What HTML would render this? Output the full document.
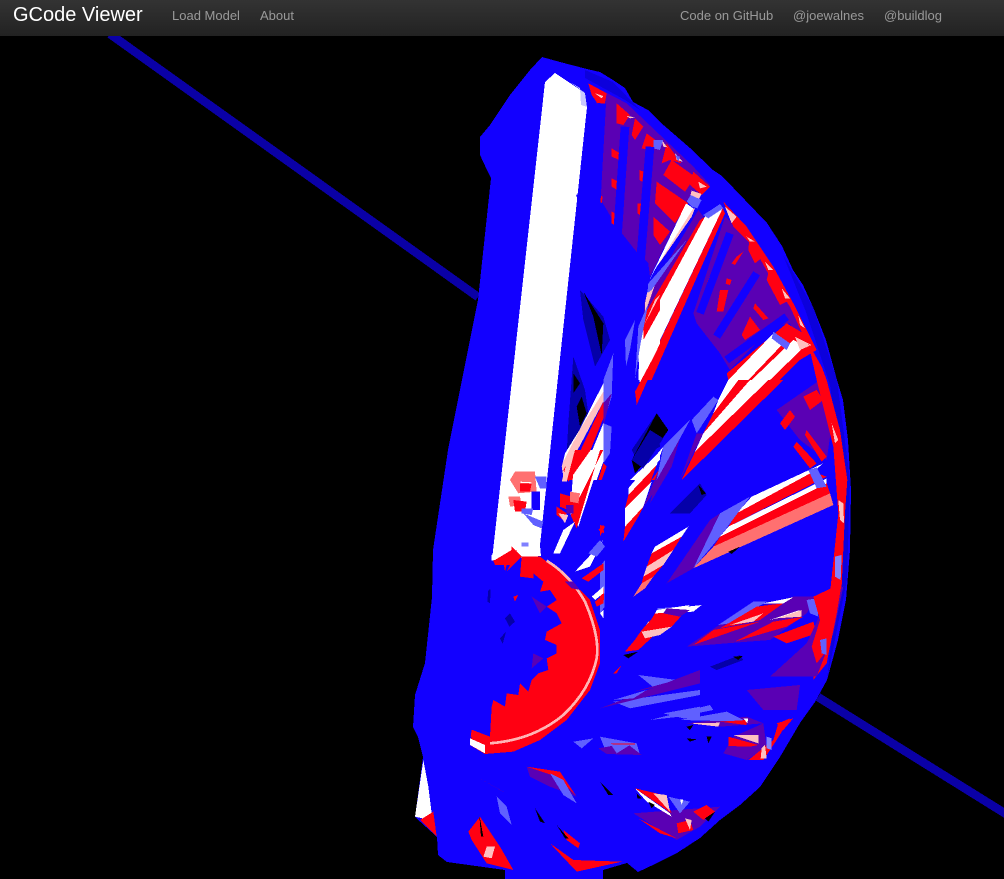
<!DOCTYPE html>
<html><head><meta charset="utf-8"><title>GCode Viewer</title>
<style>
html,body{margin:0;padding:0;background:#000;width:1004px;height:879px;overflow:hidden;font-family:"Liberation Sans",Arial,sans-serif}
#bar{position:absolute;left:0;top:0;width:1004px;height:36px;background:linear-gradient(#333,#222);z-index:2}
#bar span{position:absolute;top:8px;font-size:13px;line-height:16px;color:#999;white-space:nowrap}
#bar b{position:absolute;left:13px;top:3px;font-size:20px;line-height:24px;font-weight:400;color:#fff;white-space:nowrap}
svg{position:absolute;left:0;top:0}
</style></head><body>
<div id="bar"><b>GCode Viewer</b><span style="left:172px">Load Model</span><span style="left:260px">About</span><span style="left:680px">Code on GitHub</span><span style="left:793px">@joewalnes</span><span style="left:884px">@buildlog</span></div>
<svg width="1004" height="879" viewBox="0 0 1004 879" shape-rendering="crispEdges">
<rect width="1004" height="879" fill="#000"/>
<path d="M110 34L478 297M818 697L1006 814" stroke="#0a00a6" stroke-width="8.5" fill="none"/>
<!-- blue silhouette -->
<polygon fill="#1200ff" points="542,57 560,62 587,69 600,72 613,80 625,88 633,102 648,110 660,122 690,148 713,170 722,176 745,200 767,223 782,246 793,270 803,285 813,307 826,340 837,380 843,400 848,440 851,490 850,550 846,600 838,640 827,680 815,702 800,723 780,757 760,787 740,805 720,820 700,838 677,853 655,864 638,872 627,863 603,870 603,879 505,879 505,870 447,862 438,855 437,837 415,817 423,757 418,737 413,727 415,695 425,663 432,597 433,550 448,450 478,300 491,178 487,170 480,155 480,137 490,125 510,95 530,70"/>
<polygon fill="#0c00dc" points="783,255 813,307 837,380 850,480 847,580 827,680 838,580 843,480 830,385 806,312"/>
<polygon fill="#0c00dc" points="585,70 613,82 640,110 625,100 585,78"/>
<!-- white bar -->
<polygon fill="#fff" points="555,73 585,93 587,107 540,545 541,556 492,560 545,82"/>
<polygon fill="#c8c8ff" points="570,82 585,93 587,107 581,105 580,88"/>

<g transform="translate(560,60) scale(.33333)">
<polygon fill="#5a00b4" points="85,70 200,130 300,225 400,320 450,375 380,425 270,650 265,610 225,570 170,500 105,390 130,180"/>
<g fill="#ff0012">
<polygon points="85,70 140,100 130,155 95,105"/><polygon points="170,130 210,165 190,195 170,190"/><polygon points="225,175 250,200 225,240 215,225"/><polygon points="260,220 300,250 265,270 245,265"/><polygon points="320,250 365,310 330,300 305,310"/><polygon points="335,300 405,350 375,395 310,345"/><polygon points="290,365 385,430 345,490 285,430"/><polygon points="280,470 330,515 300,555 280,525"/><polygon points="155,265 180,280 178,300 155,290"/><polygon points="155,355 175,365 172,390 155,380"/><polygon points="155,455 175,465 172,500 155,490"/><polygon points="120,405 128,410 125,430 113,420"/><polygon points="238,330 250,335 247,365 238,360"/><polygon points="232,430 243,430 240,465 232,460"/><polygon points="400,335 450,380 425,405 390,375"/>
</g>
<g fill="#ffc0c0"><polygon points="105,100 130,108 125,115"/><polygon points="200,168 225,172 210,175"/><polygon points="305,240 322,262 310,260"/><polygon points="345,280 368,305 350,300"/><polygon points="415,365 440,380 420,385"/></g>
<g fill="#6060ff"><polygon points="280,240 310,240 300,270 280,265"/><polygon points="345,285 360,290 355,305"/></g>
<!-- blue spokes over region 1 -->
<path d="M125 130L105 490M195 200L170 560M270 260L240 620M60 400L160 640" stroke="#1200ff" stroke-width="26" fill="none"/>
<!-- strip 1 and 2 -->
<polygon fill="#5a00b4" points="415,450 430,470 250,770 255,720 285,670"/>
<polygon fill="#fff" points="378,430 400,445 290,620 268,660"/>
<polygon fill="#ffc0c0" points="405,445 395,470 305,600 290,620 400,445"/>
<polygon fill="#ff0012" points="420,480 435,470 240,830 250,770"/>
<polygon fill="#fff" points="435,470 488,445 260,925 245,960 235,960 240,830"/>
<polygon fill="#ff0012" points="488,445 495,460 275,960 245,960"/>
<polygon fill="#ffc0c0" points="265,680 290,660 255,760 255,730"/>
<polygon fill="#6060ff" points="265,670 380,540 275,690 262,700"/>
<polygon fill="#ffc0c0" points="395,392 425,402 412,425 390,410"/>
<polygon fill="#6060ff" points="380,425 392,405 425,420 412,445 395,440"/>
<polygon fill="#6060ff" points="430,465 480,432 490,445 445,475"/>
<!-- region 2 -->
<polygon fill="#5a00b4" points="495,470 600,560 700,740 760,850 720,860 690,790 640,800 510,930 480,880 410,790 400,760"/>
<g fill="#ff0012">
<polygon points="530,590 550,575 525,615 515,610"/><polygon points="448,650 465,650 440,700 432,695"/><polygon points="480,690 505,690 490,755 470,755"/><polygon points="500,655 515,660 510,675 497,672"/><polygon points="570,770 600,810 555,840 545,825"/><polygon points="585,730 625,775 610,780 580,745"/>
<polygon points="490,425 560,500 600,560 640,620 700,730 770,870 745,860 690,740 630,650 580,560 520,500"/><polygon points="570,515 610,590 585,610 565,570"/><polygon points="630,620 690,720 660,735 620,660"/>
</g>
<g fill="#ffc0c0"><polygon points="495,440 530,470 515,490"/><polygon points="560,530 585,545 570,545"/><polygon points="615,605 640,630 625,630"/><polygon points="665,685 690,715 675,715"/><polygon points="715,765 735,805 720,795"/></g>
<path d="M510 520L420 760M590 640L470 830M680 770L500 900" stroke="#1200ff" stroke-width="24" fill="none"/>
<!-- lower right strips -->
<polygon fill="#ff0012" points="500,940 680,790 730,820 770,870 720,900 660,960 505,960"/>
<polygon fill="#fff" points="505,960 640,820 670,850 565,960"/>
<polygon fill="#fff" points="575,960 700,840 735,858 630,960"/>
<polygon fill="#6060ff" points="640,815 690,850 680,870 635,835"/>
<polygon fill="#ffc0c0" points="705,830 755,855 720,870"/>
<polygon fill="#ff0012" points="745,850 785,920 800,960 770,960"/>
</g>
<!-- black holes -->
<g transform="translate(540,280) scale(.33333)">
<polygon fill="#0500a8" points="120,30 190,110 210,180 165,260 130,120"/><polygon fill="#000" points="130,35 190,130 185,225 160,110"/>
<polygon fill="#0500a8" points="85,430 100,230 135,330 145,400 80,520"/><polygon fill="#000" points="100,280 120,310 100,340"/><polygon fill="#000" points="110,380 125,350 140,400 120,440"/>
<polygon fill="#ffc0c0" points="75,520 190,335 190,365 70,590 65,560"/><polygon fill="#fff" points="190,310 190,335 75,520 70,545"/>
<polygon fill="#ff0012" points="190,365 190,415 115,600 80,600"/><polygon fill="#fff" points="190,430 190,545 170,600 120,600"/><polygon fill="#ff0012" points="190,550 200,560 185,600 175,600"/>
<polygon fill="#6060ff" points="190,300 220,220 215,350 190,430"/><polygon fill="#5a00b4" points="190,370 215,340 190,440"/><polygon fill="#6060ff" points="190,430 215,440 210,520 190,550"/>
<polygon fill="#6060ff" points="255,180 285,120 270,210 258,260"/>
<polygon fill="#ff0012" points="360,50 360,90 310,180 312,130"/><polygon fill="#ffc0c0" points="345,60 360,45 315,130"/><polygon fill="#fff" points="360,100 360,190 300,320 295,220"/><polygon fill="#ff0012" points="360,195 360,215 290,375 285,335"/><polygon fill="#6060ff" points="295,140 325,70 300,200 285,300"/>
<polygon fill="#0500a8" points="275,510 350,400 360,500 290,540"/><polygon fill="#000" points="280,530 315,475 330,520 295,540"/>
<polygon fill="#fff" points="270,600 360,515 360,540 300,600"/><polygon fill="#ff0012" points="335,600 360,565 360,600"/>
</g>

<g transform="translate(600,380) scale(.33333)">
<polygon fill="#5a00b4" points="530,90 660,0 700,100 680,240 600,180"/>
<polygon fill="#ff0012" points="650,0 680,0 720,150 742,300 735,400 725,620 680,850 640,900 640,870 690,640 715,400 700,200"/>
<g fill="#ff0012"><polygon points="610,50 650,30 670,60 630,90"/><polygon points="540,130 570,90 585,110 555,150"/><polygon points="590,185 650,250 630,265 580,200"/><polygon points="620,150 680,230 665,245 615,165"/></g>
<polygon fill="#ffc0c0" points="695,130 715,180 705,190"/><polygon fill="#ffc0c0" points="715,360 730,370 732,430 720,420"/><polygon fill="#8080ff" points="705,530 725,525 722,600 705,590"/>
<!-- group 1 -->
<polygon fill="#000" points="95,240 170,100 205,150 150,230 105,280"/><polygon fill="#0500a8" points="95,240 150,150 190,175 130,265"/>
<polygon fill="#0500a8" points="210,400 300,310 320,345 270,400"/><polygon fill="#000" points="295,315 318,340 305,345"/>
<polygon fill="#fff" points="85,325 190,200 170,255 85,345"/><polygon fill="#ff0012" points="85,345 170,255 150,310 75,385"/><polygon fill="#fff" points="75,385 155,305 130,380 75,440"/><polygon fill="#ff0012" points="75,440 130,380 115,410 70,485"/>
<polygon fill="#5a00b4" points="130,380 185,250 230,170 160,340"/><polygon fill="#6060ff" points="190,200 270,120 240,175 170,300"/><polygon fill="#5a00b4" points="170,300 240,175 215,260 150,370"/>
<!-- group 2 -->
<polygon fill="#fff" points="355,60 385,0 415,0 340,100"/><polygon fill="#ff0012" points="340,100 415,0 450,0 310,160"/><polygon fill="#fff" points="310,160 450,0 505,0 285,215"/><polygon fill="#ff0012" points="285,215 505,0 550,0 245,300"/><polygon fill="#6060ff" points="275,120 340,50 355,60 290,160"/><polygon fill="#5a00b4" points="240,300 290,160 310,160 270,240"/>
<!-- group 3 -->
<polygon fill="#fff" points="455,350 670,250 640,275 410,400"/><polygon fill="#ff0012" points="410,400 640,275 680,290 385,440"/><polygon fill="#fff" points="385,440 680,295 680,310 360,470"/><polygon fill="#ff0012" points="360,470 680,310 690,340 340,500"/><polygon fill="#ff7070" points="340,500 690,340 700,375 280,565"/>
<polygon fill="#6060ff" points="280,565 360,400 450,350 360,470"/><polygon fill="#5a00b4" points="200,610 330,420 360,400 280,565"/>
<polygon fill="#6060ff" points="625,270 650,262 680,320 650,325"/>
<polygon fill="#000" points="385,515 420,500 395,522"/>
<!-- group 4 -->
<polygon fill="#fff" points="165,500 265,440 245,470 155,520"/><polygon fill="#ff0012" points="155,520 245,470 220,510 140,560"/><polygon fill="#ffc0c0" points="140,560 220,510 190,555 130,590"/><polygon fill="#ff0012" points="130,590 190,555 160,590 125,610"/><polygon fill="#ff7070" points="125,610 160,590 135,625 100,650"/>
<!-- group 5 -->
<polygon fill="#fff" points="170,690 305,675 280,695 165,700"/><polygon fill="#6060ff" points="170,685 240,680 260,695 175,695"/><polygon fill="#ff0012" points="165,700 250,695 215,720 150,725"/><polygon fill="#ffc0c0" points="145,725 215,720 180,750 125,755"/><polygon fill="#ff0012" points="125,755 180,750 115,810 75,815"/>
<polygon fill="#000" points="70,825 115,815 85,835"/>
<!-- group 6 -->
<polygon fill="#5a00b4" points="260,800 410,700 580,650 650,650 620,700 510,780 380,790"/>
<polygon fill="#6060ff" points="355,735 460,665 500,665 390,730"/><polygon fill="#fff" points="490,670 580,652 550,670"/><polygon fill="#ff0012" points="360,745 470,680 550,670 480,720"/><polygon fill="#ffc0c0" points="390,735 490,700 460,725"/><polygon fill="#ff0012" points="280,795 340,750 480,725 380,760"/>
<polygon fill="#fff" points="510,720 600,690 590,700"/><polygon fill="#ffc0c0" points="530,715 605,690 605,710"/><polygon fill="#ff0012" points="405,785 520,725 610,710 560,740"/><polygon fill="#6060ff" points="620,660 650,655 655,710 630,700"/>
<polygon fill="#ff0012" points="520,770 640,725 650,760 560,790"/>
<polygon fill="#5a00b4" points="510,890 620,790 690,640 730,620 700,760 650,890"/>
<polygon fill="#ff0012" points="640,650 725,610 710,700 690,800 650,850 635,800 660,720"/>
<polygon fill="#6060ff" points="660,780 680,775 680,825 665,820"/>
<polygon fill="#0500a8" points="330,860 420,825 430,840 350,870"/><polygon fill="#000" points="400,830 428,828 415,840"/>
<polygon fill="#6060ff" points="0,560 15,540 14,680 0,700"/>
<polygon fill="#ff0012" points="0,640 12,625 12,660 0,660"/>
<polygon fill="#ff0012" points="0,435 15,440 0,470"/>
</g>

<!-- hub -->
<g transform="translate(400,450) scale(.33333)">
<!-- upper strips near hub -->
<polygon fill="#fff" points="525,0 610,0 535,230 510,190"/>
<polygon fill="#ff0012" points="490,60 525,0 572,0 505,95"/>
<polygon fill="#ffc0c0" points="485,95 510,0 525,0 500,95"/>
<polygon fill="#ff0012" points="512,195 610,0 600,0 530,235"/>
<polygon fill="#fff" points="460,310 490,240 525,215 480,310"/>
<polygon fill="#ff0012" points="470,170 500,190 490,210 470,195"/><polygon fill="#ffc0c0" points="475,190 505,195 495,220"/>
<polygon fill="#fff" points="525,365 585,300 610,270 570,350"/><polygon fill="#ff0012" points="545,385 610,340 610,360 565,395"/>
<polygon fill="#fff" points="575,440 610,410 610,430 585,450"/><polygon fill="#ff0012" points="585,455 610,435 610,460 590,470"/><polygon fill="#fff" points="600,490 610,480 610,505"/>
<polygon fill="#6060ff" points="565,310 600,270 615,290 590,320"/><polygon fill="#ff0012" points="595,240 610,225 612,250"/>
<!-- blobs on white bar -->
<polygon fill="#ff7070" points="345,65 405,65 410,125 355,130 330,90"/><polygon fill="#ff0012" points="360,100 395,100 390,125 360,125"/><polygon fill="#fff" points="362,95 395,97 395,100 362,99"/>
<polygon fill="#6060ff" points="405,80 440,80 440,115 420,115"/><polygon fill="#ff7070" points="325,140 360,140 365,165 330,170"/><polygon fill="#ff0012" points="340,150 380,155 375,185 345,185"/><polygon fill="#1200ff" points="395,125 420,125 420,180 395,180"/><polygon fill="#6060ff" points="365,175 400,175 395,195 365,190"/>
<polygon fill="#6060ff" points="370,190 430,215 425,235 400,225"/>
<polygon fill="#ff0012" points="480,130 550,150 530,190 480,170"/><polygon fill="#ff7070" points="510,125 540,130 535,160 510,155"/><polygon fill="#5a00b4" points="498,165 520,165 520,190 500,190"/>
<!-- hub base -->
<polygon fill="#ff0012" points="275,325 335,290 365,320 420,320 500,380 570,450 600,540 600,640 570,720 500,810 420,870 340,905 255,912 210,885 218,840 270,860 275,770 280,750 315,770 320,730 355,735 360,700 385,725 395,690 415,670 445,660 440,625 470,610 470,585 435,570 440,545 485,520 470,490 440,470 470,450 450,420 420,425 430,395 400,370 400,385 360,380 365,320 340,345 320,365 285,345"/>
<polygon fill="#1200ff" points="275,320 285,345 330,345 320,365 265,430 255,450 230,800 215,840 140,700 200,300"/>
<polygon fill="#ff0012" points="285,335 350,300 350,320 330,345 320,345 315,365 312,345 288,345"/>
<polygon fill="#fff" points="275,315 335,290 335,300 285,330 275,332"/>
<polygon fill="#fff" points="360,285 415,280 410,310 365,300"/>
<polygon fill="#8080ff" points="365,278 385,278 385,290 365,290"/>
<polygon fill="#fff" points="210,865 255,885 255,910 210,885"/>
<polygon fill="#ff0012" points="215,840 262,860 258,880 212,860"/>
<path d="M440 332Q510 375 555 455 600 560 590 625 570 720 490 795 400 870 270 880" fill="none" stroke="#ffb4b4" stroke-width="8"/>
<polygon fill="#5a00b4" points="495,395 520,395 540,420 515,415"/>
<polygon fill="#0500a8" points="265,420 272,418 270,460 262,455"/><polygon fill="#0500a8" points="315,505 330,490 345,515 328,530"/><polygon fill="#0500a8" points="300,565 318,545 308,582"/>
<polygon fill="#ff0012" points="340,440 355,435 345,455"/><polygon fill="#5a00b4" points="395,440 440,470 420,490"/><polygon fill="#5a00b4" points="400,610 430,625 395,655"/>
<!-- right of hub -->
<polygon fill="#ff0012" points="725,540 780,480 860,480 815,530 740,560 680,605"/><polygon fill="#fff" points="770,480 870,465 850,485 770,490"/><polygon fill="#ffc0c0" points="725,545 815,530 780,555 735,565"/><polygon fill="#5a00b4" points="800,475 870,480 840,500 790,490"/>
<polygon fill="#ff0012" points="640,670 665,645 650,670"/>
<polygon fill="#6060ff" points="715,675 830,690 770,720"/>
<polygon fill="#6060ff" points="640,755 900,720 900,735 690,775"/><polygon fill="#6060ff" points="790,790 900,770 900,810 850,805"/>
<polygon fill="#5a00b4" points="600,775 900,660 900,700 700,750"/>
</g>

<g transform="translate(400,680) scale(.33333)">
<polygon fill="#fff" points="70,240 85,320 95,400 90,420 45,410"/><polygon fill="#ff0012" points="60,420 100,395 110,470 70,430"/>
<polygon fill="#ff0012" points="240,410 300,500 340,570 260,550 215,480 205,455"/>
<polygon fill="#ffc0c0" points="260,500 285,500 275,535 250,530"/><polygon fill="#000" points="238,405 250,470 243,470"/>
<polygon fill="#ff0012" points="450,490 520,540 665,545 530,575"/><polygon fill="#ff0012" points="490,450 540,490 535,505 500,480"/>
<polygon fill="#000" points="470,435 505,475 495,475"/><polygon fill="#000" points="405,385 435,430 420,425"/><polygon fill="#000" points="600,305 640,345 625,345"/>
<polygon fill="#5a00b4" points="380,260 480,280 530,350 450,320 390,290"/><polygon fill="#ff0012" points="380,260 480,275 530,350 470,290"/><polygon fill="#6060ff" points="450,280 490,300 530,370 490,345"/>
<polygon fill="#6060ff" points="290,350 320,380 335,435 300,400"/><polygon fill="#5a00b4" points="230,290 320,340 300,330"/>
<polygon fill="#5a00b4" points="700,400 960,380 900,440 830,480"/>
<polygon fill="#ff0012" points="715,415 830,475 780,460"/><polygon fill="#fff" points="705,325 810,400 815,410 740,365"/><polygon fill="#ff0012" points="705,325 790,345 815,400"/><polygon fill="#ffc0c0" points="760,340 800,345 810,395"/>
<polygon fill="#6060ff" points="805,350 870,365 840,400"/><polygon fill="#fff" points="840,358 850,358 845,375"/>
<polygon fill="#ff0012" points="830,430 870,420 880,450 835,460"/><polygon fill="#ffc0c0" points="855,415 875,420 870,450"/>
<polygon fill="#ff0012" points="880,395 920,375 945,395 910,420"/><polygon fill="#000" points="915,415 945,395 925,425"/>
<polygon fill="#000" points="710,340 725,355 712,355"/><polygon fill="#000" points="745,365 765,375 755,385"/>
<polygon fill="#5a00b4" points="970,220 1000,170 1090,130 1100,200 1040,240"/>
<polygon fill="#ff0012" points="985,170 1075,195 1050,200 985,198"/><polygon fill="#ffc0c0" points="1000,165 1075,165 1075,190"/>
<polygon fill="#ff0012" points="1045,240 1120,180 1135,130 1170,115 1130,180 1090,240"/><polygon fill="#ffc0c0" points="1085,205 1095,195 1100,235 1082,235"/>
<polygon fill="#8080ff" points="1100,170 1115,175 1115,210 1100,205"/>
<polygon fill="#6060ff" points="600,170 710,190 720,225 620,220"/><polygon fill="#5a00b4" points="595,205 680,190 725,225 620,222"/><polygon fill="#6060ff" points="620,175 690,195 650,220"/><polygon fill="#ff0012" points="630,190 705,190 705,194 640,194"/>
<polygon fill="#6060ff" points="520,185 580,175 545,205"/>
<polygon fill="#5a00b4" points="860,130 1040,110 1090,130 960,140"/><polygon fill="#ffc0c0" points="870,130 960,128 955,140"/><polygon fill="#6060ff" points="840,120 980,95 1040,125"/><polygon fill="#ff0012" points="960,125 1040,120 1040,135"/><polygon fill="#fff" points="1030,115 1045,115 1042,130"/>
<polygon fill="#6060ff" points="750,120 930,75 940,90 840,110"/>
<polygon fill="#5a00b4" points="1040,30 1200,15 1190,90 1090,90"/><polygon fill="#ff0012" points="1130,130 1180,115 1150,150"/>
<polygon fill="#000" points="860,140 880,135 870,150"/><polygon fill="#000" points="920,170 935,170 925,190"/><polygon fill="#000" points="860,175 890,178 870,185"/>
<polygon fill="#6060ff" points="640,60 740,30 700,55"/><polygon fill="#5a00b4" points="700,35 830,0 780,20"/>
</g>
</svg>
</body></html>
